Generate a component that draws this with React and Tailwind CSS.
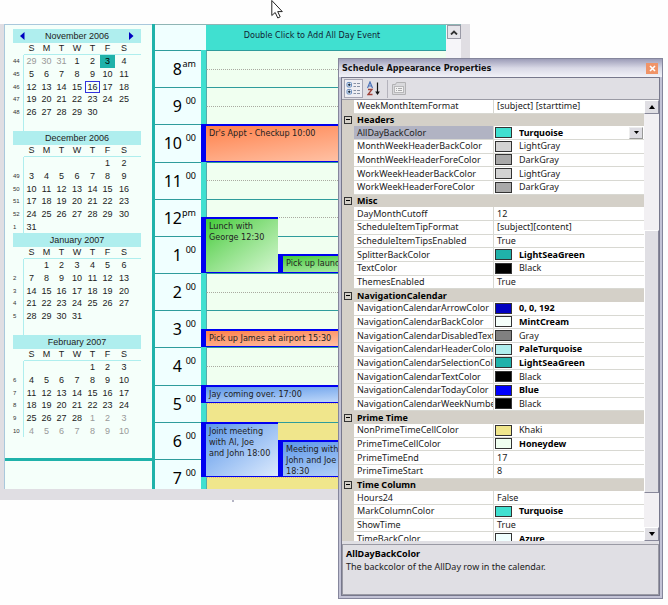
import React from "react";

const months = [
  {
    name: "November 2006",
    nav: true,
    weeks: [
      [44, "-29", "-30", "-31", 1, 2, 3, 4],
      [45, 5, 6, 7, 8, 9, 10, 11],
      [46, 12, 13, 14, 15, 16, 17, 18],
      [47, 19, 20, 21, 22, 23, 24, 25],
      [48, 26, 27, 28, 29, 30, "", ""],
      ["", "", "", "", "", "", "", ""],
    ],
  },
  {
    name: "December 2006",
    weeks: [
      ["", "", "", "", "", "", 1, 2],
      [49, 3, 4, 5, 6, 7, 8, 9],
      [50, 10, 11, 12, 13, 14, 15, 16],
      [51, 17, 18, 19, 20, 21, 22, 23],
      [52, 24, 25, 26, 27, 28, 29, 30],
      [1, 31, "", "", "", "", "", ""],
    ],
  },
  {
    name: "January 2007",
    weeks: [
      ["", "", 1, 2, 3, 4, 5, 6],
      [2, 7, 8, 9, 10, 11, 12, 13],
      [3, 14, 15, 16, 17, 18, 19, 20],
      [4, 21, 22, 23, 24, 25, 26, 27],
      [5, 28, 29, 30, 31, "", "", ""],
      ["", "", "", "", "", "", "", ""],
    ],
  },
  {
    name: "February 2007",
    weeks: [
      ["", "", "", "", "", 1, 2, 3],
      [6, 4, 5, 6, 7, 8, 9, 10],
      [7, 11, 12, 13, 14, 15, 16, 17],
      [8, 18, 19, 20, 21, 22, 23, 24],
      [9, 25, 26, 27, 28, "-1", "-2", "-3"],
      [10, "-4", "-5", "-6", "-7", "-8", "-9", "-10"],
    ],
  },
];

const hours = [
  ["8", "am"], ["9", "00"], ["10", "00"], ["11", "00"], ["12", "pm"], ["1", "00"],
  ["2", "00"], ["3", "00"], ["4", "00"], ["5", "00"], ["6", "00"], ["7", "00"],
];

const coral = "from-[#ff8048] to-[#ffd2bc]";
const green = "from-[#3fcb35] to-[#d3f6cf]";
const blue = "from-[#5c97e8] to-[#dceafc]";

const events = [
  { text: "Dr's Appt - Checkup 10:00", cls: "row-start-5 row-end-7 col-start-2 col-end-5", fill: coral },
  { text: "Lunch with\nGeorge 12:30", cls: "row-start-10 row-end-13 col-start-2 col-end-4", fill: green },
  { text: "Pick up laundry 13:30", cls: "row-start-12 row-end-13 col-start-4 col-end-5", fill: green },
  { text: "Pick up James at airport 15:30", cls: "row-start-16 row-end-17 col-start-2 col-end-5", fill: coral },
  { text: "Jay coming over. 17:00", cls: "row-start-19 row-end-20 col-start-2 col-end-5", fill: blue },
  { text: "Joint meeting\nwith Al, Joe\nand John 18:00", cls: "row-start-21 row-end-24 col-start-2 col-end-4", fill: blue },
  { text: "Meeting with\nJohn and Joe\n18:30", cls: "row-start-22 row-end-24 col-start-4 col-end-5", fill: blue },
];

const properties = [
  { n: "WeekMonthItemFormat", v: "[subject] [starttime]" },
  { group: "Headers" },
  { n: "AllDayBackColor", v: "Turquoise", c: "bg-[#40e0d0]", b: true, selected: true },
  { n: "MonthWeekHeaderBackColor", v: "LightGray", c: "bg-[#d3d3d3]" },
  { n: "MonthWeekHeaderForeColor", v: "DarkGray", c: "bg-[#a9a9a9]" },
  { n: "WorkWeekHeaderBackColor", v: "LightGray", c: "bg-[#d3d3d3]" },
  { n: "WorkWeekHeaderForeColor", v: "DarkGray", c: "bg-[#a9a9a9]" },
  { group: "Misc" },
  { n: "DayMonthCutoff", v: "12" },
  { n: "ScheduleItemTipFormat", v: "[subject][content]" },
  { n: "ScheduleItemTipsEnabled", v: "True" },
  { n: "SplitterBackColor", v: "LightSeaGreen", c: "bg-[#20b2aa]", b: true },
  { n: "TextColor", v: "Black", c: "bg-black" },
  { n: "ThemesEnabled", v: "True" },
  { group: "NavigationCalendar" },
  { n: "NavigationCalendarArrowColor", v: "0, 0, 192", c: "bg-[#0000c0]", b: true },
  { n: "NavigationCalendarBackColor", v: "MintCream", c: "bg-[#f5fffa]", b: true },
  { n: "NavigationCalendarDisabledTextColor", v: "Gray", c: "bg-[#808080]" },
  { n: "NavigationCalendarHeaderColor", v: "PaleTurquoise", c: "bg-[#afeeee]", b: true },
  { n: "NavigationCalendarSelectionColor", v: "LightSeaGreen", c: "bg-[#20b2aa]", b: true },
  { n: "NavigationCalendarTextColor", v: "Black", c: "bg-black" },
  { n: "NavigationCalendarTodayColor", v: "Blue", c: "bg-[#0000ff]", b: true },
  { n: "NavigationCalendarWeekNumberColor", v: "Black", c: "bg-black" },
  { group: "Prime Time" },
  { n: "NonPrimeTimeCellColor", v: "Khaki", c: "bg-[#f0e68c]" },
  { n: "PrimeTimeCellColor", v: "Honeydew", c: "bg-[#f0fff0]", b: true },
  { n: "PrimeTimeEnd", v: "17" },
  { n: "PrimeTimeStart", v: "8" },
  { group: "Time Column" },
  { n: "Hours24", v: "False" },
  { n: "MarkColumnColor", v: "Turquoise", c: "bg-[#40e0d0]", b: true },
  { n: "ShowTime", v: "True" },
  { n: "TimeBackColor", v: "Azure", c: "bg-[#f0ffff]", b: true },
];

function dayClass(month, value) {
  if (month.nav && value === 3) return "bg-[#20b2aa] text-black";
  if (month.nav && value === 16) return "outline outline-1 -outline-offset-1 outline-[#3333dd] text-[#222]";
  if (String(value).startsWith("-")) return "text-[#999]";
  return "text-[#222]";
}

function Month({ month }) {
  return (
    <section className="h-[102px]">
      <header className="flex h-[14px] items-center justify-between bg-[#afeeee] px-[7px] text-[9px] leading-[14px] text-[#222]">
        <span className="flex w-2">
          {month.nav && (
            <button aria-label="Previous month">
              <svg className="h-[8px] w-[5px]" viewBox="0 0 5 8"><path d="M4.500 0v8L0 4z" fill="#0000c0" /></svg>
            </button>
          )}
        </span>
        <h2>{month.name}</h2>
        <span className="flex w-2 justify-end">
          {month.nav && (
            <button aria-label="Next month">
              <svg className="h-[8px] w-[5px]" viewBox="0 0 5 8"><path d="M0 0v8l4.500-4z" fill="#0000c0" /></svg>
            </button>
          )}
        </span>
      </header>
      <table className="w-full table-fixed border-separate border-spacing-0 text-center text-[9px] leading-[11px]">
        <colgroup>
          <col className="w-[11px]" />
          <col className="w-[15px]" />
          <col className="w-[15px]" />
          <col className="w-[15px]" />
          <col className="w-[16px]" />
          <col className="w-[15px]" />
          <col className="w-[15px]" />
          <col className="w-[18px]" />
          <col />
        </colgroup>
        <thead>
          <tr className="h-[12px]">
            <th className="p-0" />
            {["S", "M", "T", "W", "T", "F", "S"].map((d, i) => (
              <th key={i} className="border-b border-[#afeeee] p-0 font-normal text-[#222]">{d}</th>
            ))}
            <th className="border-b border-[#afeeee] p-0" />
          </tr>
        </thead>
        <tbody>
          {month.weeks.map((week, r) => (
            <tr key={r} className={r % 3 === 2 ? "h-[12px]" : "h-[13px]"}>
              <td className="border-r border-[#afeeee] p-0 text-left text-[6px] text-[#333]">{week[0]}</td>
              {week.slice(1).map((d, i) => (
                <td key={i} className={"p-0 " + dayClass(month, d)}>{String(d).replace("-", "")}</td>
              ))}
              <td className="p-0" />
            </tr>
          ))}
        </tbody>
      </table>
    </section>
  );
}

function Scheduler() {
  return (
    <main className="flex min-w-0 flex-1 border-t border-[#8fb5b5] font-['DejaVu_Sans_Condensed','Noto_Sans',sans-serif]">
      <div className="min-w-0 flex-1 bg-[#f0ffff]">
        <div className="flex h-[25px]">
          <div className="w-[51px]" />
          <button className="flex-1 bg-[#40e0d0] pb-[6px] pr-[28px] text-[9px] leading-[12px] text-[#123]">
            Double Click to Add All Day Event
          </button>
        </div>
        <div className="h-[439px] overflow-hidden">
          <div className="grid h-[446px] grid-cols-[46px_5px_72px_1fr] grid-rows-24">
            {hours.map(([h, m], i) => (
              <React.Fragment key={h}>
                <div
                  className="col-start-1 flex items-start justify-end border-t border-[#2f9c9c] pr-[5px] font-['Noto_Sans',sans-serif] text-black"
                  style={{ gridRow: `${i * 2 + 1} / span 2` }}
                >
                  <span className="pt-[8px] text-[16px] leading-[20px]">{h}</span>
                  <span className="w-[14px] pt-[7px] text-right text-[9px] leading-[12px]">{m}</span>
                </div>
                <div
                  className={"col-start-3 col-end-5 border-l border-t border-l-[#5aa] border-t-[#2f9c9c] " + (i < 9 ? "bg-[#f0fff0]" : "bg-[#f0e68c]")}
                  style={{ gridRow: i * 2 + 1 }}
                />
                <div
                  className={"col-start-3 col-end-5 border-l border-t border-l-[#5aa] [border-top-style:dotted] " + (i < 9 ? "border-t-[#a9aaa0] bg-[#f0fff0]" : "border-t-[#e0b878] bg-[#f0e68c]")}
                  style={{ gridRow: i * 2 + 2 }}
                />
              </React.Fragment>
            ))}
            <div className="col-start-2 row-start-1 row-end-25 bg-[#40e0d0]" />
            {events.map((e) => (
              <article
                key={e.text}
                className={"min-h-0 overflow-hidden border-b border-l-[5px] border-t-2 border-[#0000f0] bg-linear-to-br pl-[3px] pt-[2px] text-[9px] leading-[11px] text-[#222] " + e.cls + " " + e.fill}
              >
                <p className="whitespace-pre">{e.text}</p>
              </article>
            ))}
          </div>
        </div>
      </div>
      <div className="w-[15px] bg-[#f6f5f9] pl-px">
        <button aria-label="Scroll up" className="flex h-[14px] w-[14px] items-center justify-center border border-[#9a9aa6] bg-[#e6e5ea]">
          <svg className="h-[5px] w-[8px]" viewBox="0 0 8 5"><path d="M1 4.500L4 1.500l3 3" fill="none" stroke="#333" strokeWidth="1.800" /></svg>
        </button>
      </div>
    </main>
  );
}

function Toolbar() {
  return (
    <div className="flex h-[21px] items-center gap-1 bg-[#e0dfe4] px-[2px]" role="toolbar">
      <button aria-label="Categorized" className="flex h-[19px] w-[19px] items-center justify-center border border-[#a6a6b4] bg-[#eeeef3]">
        <svg className="h-[15px] w-[15px]" viewBox="0 0 15 15" fill="none">
          <rect x="1" y="1.500" width="4.500" height="4.500" rx="1" fill="#dce8f8" stroke="#6a8fc0" />
          <path d="M2 3.750h2.600M3.250 2.500v2.500" stroke="#123" />
          <rect x="1" y="8.500" width="4.500" height="4.500" rx="1" fill="#dce8f8" stroke="#6a8fc0" />
          <path d="M2 10.750h2.600M3.250 9.500v2.500" stroke="#123" />
          <path d="M7.500 2.500h2.500M11 2.500h3M7.500 5.500h2.500M11 5.500h3M7.500 9.500h2.500M11 9.500h3M7.500 12.500h2.500M11 12.500h3" stroke="#8792a5" />
        </svg>
      </button>
      <button aria-label="Alphabetical" className="flex h-[19px] w-[16px] items-center">
        <svg className="h-[15px] w-[15px]" viewBox="0 0 15 15" fill="none">
          <path d="M0.500 7L3 1l2.500 6M1.500 5h3" stroke="#4a72b8" strokeWidth="1.200" />
          <path d="M1 8.500h4L1 13.500h4.500" stroke="#a04038" strokeWidth="1.300" />
          <path d="M10.500 1.500v11" stroke="#111" strokeWidth="1.200" />
          <path d="M8.200 10.500h4.600L10.500 14z" fill="#111" />
        </svg>
      </button>
      <span className="h-[18px] w-px bg-[#b4b3bc]" />
      <button aria-label="Property pages" className="flex h-[19px] w-[14px] items-center justify-center">
        <svg className="h-[13px] w-[14px]" viewBox="0 0 14 13" fill="none">
          <path d="M0.500 2.500h3l1-2h9v12h-13z" fill="#d9d9dc" stroke="#b2b2b4" />
          <rect x="2.500" y="4.500" width="9" height="6" fill="#f2f2f2" stroke="#b8b8ba" />
          <path d="M4 6.500h1M6 6.500h4M4 8.500h1M6 8.500h4" stroke="#a8a8aa" />
        </svg>
      </button>
    </div>
  );
}

function PropertyRow({ p }) {
  if (p.group) {
    return (
      <tr className="bg-[#d4d0c8]">
        <th className="p-0">
          <button aria-label={"Collapse " + p.group} className="ml-[2px] flex h-[8px] w-[8px] items-center justify-center border border-[#333]">
            <span className="h-px w-[4px] bg-black" />
          </button>
        </th>
        <th colSpan={2} className="p-0 pl-[3px] text-left font-bold text-black">{p.group}</th>
      </tr>
    );
  }
  return (
    <tr>
      <td className="bg-[#d4d0c8] p-0" />
      <th
        scope="row"
        className={"overflow-hidden whitespace-nowrap border-b border-r border-[#d8d8d2] p-0 pl-[3px] text-left font-normal " + (p.selected ? "bg-[#b1b3c3]" : "bg-white")}
      >
        {p.n}
      </th>
      <td className="border-b border-[#d8d8d2] bg-white p-0">
        <div className={"flex items-center gap-[7px] " + (p.c ? "pl-px" : "pl-[3px]")}>
          {p.c && <span className={"h-[11px] w-[17px] border border-[#333] " + p.c} />}
          {p.selected ? (
            <span className="flex flex-1 items-center">
              <select aria-label={p.n} className="h-[12px] flex-1 appearance-none bg-white p-0 font-bold leading-[12px] text-black">
                <option>{p.v}</option>
              </select>
              <span className="mr-px flex h-[12px] w-[14px] items-center justify-center border border-[#999] border-l-[#eee] border-t-[#eee] bg-[#dddce2]">
                <svg className="h-[3px] w-[5px]" viewBox="0 0 5 3"><path d="M0 0h5L2.500 3z" fill="#000" /></svg>
              </span>
            </span>
          ) : (
            <span className={p.b ? "font-bold text-black" : ""}>{p.v}</span>
          )}
        </div>
      </td>
    </tr>
  );
}

function PropertiesWindow() {
  return (
    <aside className="absolute left-[338px] right-[5px] top-[58px] border border-[#85869c] bg-[#c3c3d6] p-[2px]">
      <div className="-mx-[2px] -mt-[2px] flex h-[18px] items-center justify-between bg-linear-to-b from-[#9d9db8] via-[#d9d9e6] to-[#f2f2f8] pl-[3px] pr-[4px]">
        <h1 className="font-['DejaVu_Sans_Condensed','Noto_Sans',sans-serif] text-[9px] font-bold leading-[12px] text-[#111]">
          Schedule Appearance Properties
        </h1>
        <button aria-label="Close" className="flex h-[11px] w-[12px] items-center justify-center bg-[#f09468]">
          <svg className="h-[7px] w-[7px]" viewBox="0 0 7 7"><path d="M1 1l5 5M6 1L1 6" stroke="#fff" strokeWidth="1.600" /></svg>
        </button>
      </div>
      <div className="border border-[#77788c] bg-[#e0dfe4] font-['Noto_Sans',sans-serif] text-[9px] leading-[12px] text-[#222]">
        <Toolbar />
        <div className="flex h-[442px] border-t border-[#9a9aa4]">
          <div className="min-w-0 flex-1 overflow-hidden">
            <table className="h-[446px] w-full table-fixed border-separate border-spacing-0">
              <colgroup>
                <col className="w-[12px]" />
                <col className="w-[140px]" />
                <col />
              </colgroup>
              <tbody>
                {properties.map((p) => (
                  <PropertyRow key={p.n || p.group} p={p} />
                ))}
              </tbody>
            </table>
          </div>
          <div className="flex w-[15px] flex-col bg-[#f2f0f3]">
            <button aria-label="Scroll up" className="flex h-[14px] items-center justify-center border border-[#88889a] border-l-white border-t-white bg-[#e0dfe4]">
              <svg className="h-[4px] w-[6px]" viewBox="0 0 6 4"><path d="M0 4h6L3 0z" fill="#000" /></svg>
            </button>
            <div className="flex-[117]" />
            <div className="flex-[264] border border-[#88889a] border-l-white border-t-white bg-[#e0dfe4]" />
            <div className="flex-[34]" />
            <button aria-label="Scroll down" className="flex h-[14px] items-center justify-center border border-[#88889a] border-l-white border-t-white bg-[#e0dfe4]">
              <svg className="h-[4px] w-[6px]" viewBox="0 0 6 4"><path d="M0 0h6L3 4z" fill="#000" /></svg>
            </button>
          </div>
        </div>
        <div className="mt-[3px] h-[51px] border border-[#9a9aa4] px-[3px] pt-[2px] leading-[13px]">
          <h2 className="font-bold text-black">AllDayBackColor</h2>
          <p>The backcolor of the AllDay row in the calendar.</p>
        </div>
      </div>
    </aside>
  );
}

export default function App() {
  return (
    <div className="relative min-h-screen bg-[#fefefe] pt-6">
      <div className="mr-[198px] flex bg-[#e0dee3] pb-[11px] pl-1 pr-[9px]">
        <nav className="flex w-[148px] flex-col border-l border-t border-[#a9c8dc] bg-[#f5fffa] font-['Liberation_Sans',Arial,sans-serif]">
          <div className="flex-1 pl-[8px] pr-[11px] pt-[4px]">
            {months.map((m) => (
              <Month key={m.name} month={m} />
            ))}
          </div>
          <div className="h-[31px] border-t-[3px] border-[#20b2aa]" />
        </nav>
        <div className="w-[3px] bg-[#20b2aa]" />
        <Scheduler />
      </div>
      <div className="ml-[232px] h-[2px] w-[2px] bg-[#b4b4c4]" />
      <PropertiesWindow />
      <svg className="absolute left-[271px] top-0 h-[19px] w-[13px]" viewBox="0 0 13 19">
        <path d="M0.800 0.500v15l3.400-3 2.600 5.500 2.400-1.200-2.500-5.200h4.600z" fill="#fff" stroke="#222" />
      </svg>
    </div>
  );
}
